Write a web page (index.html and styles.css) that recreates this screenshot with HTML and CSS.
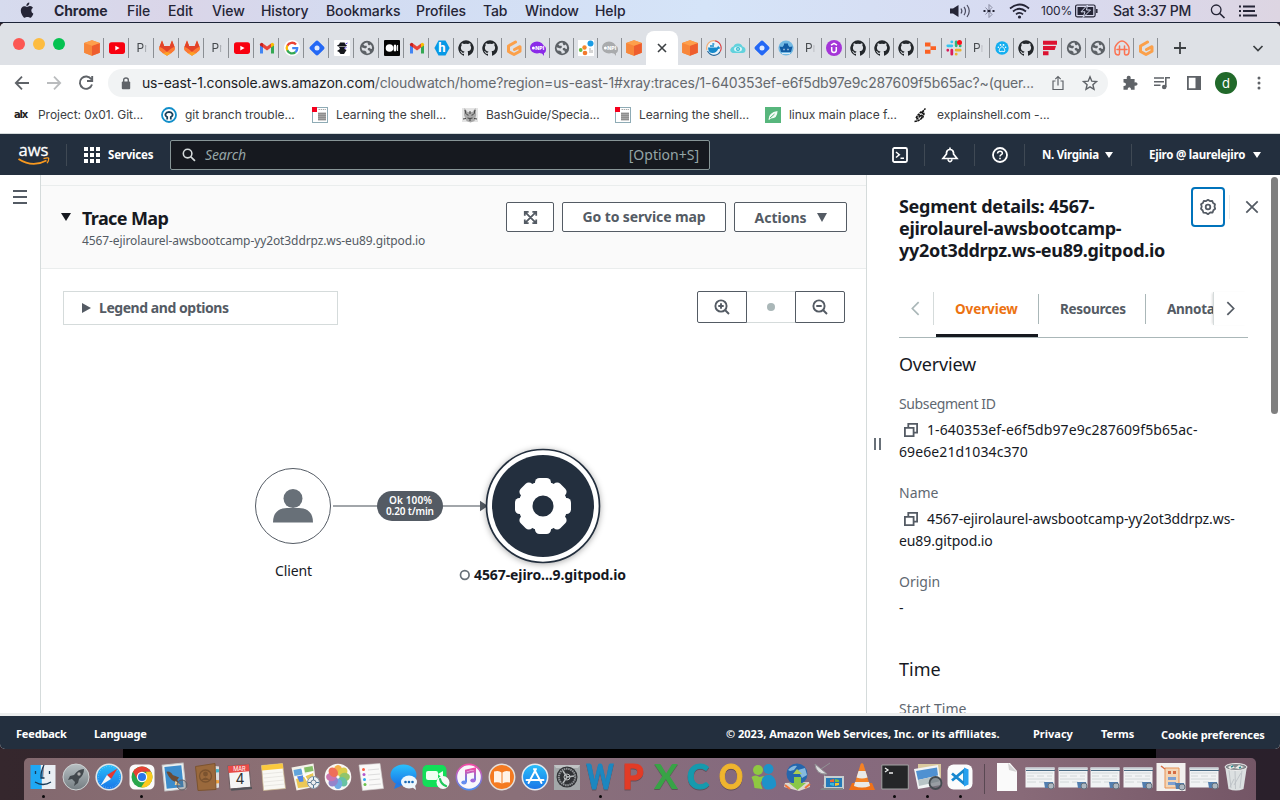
FILE: index.html
```html
<!DOCTYPE html>
<html lang="en">
<head>
<meta charset="utf-8">
<title>CloudWatch – Trace Map</title>
<link rel="stylesheet" href="styles.css">
</head>
<body>
<svg class="defs" width="0" height="0">
  <defs>
    <symbol id="cube" viewBox="0 0 16 16"><path d="M8 .3 15.8 3v9.7L8 15.8.2 12.7V3z" fill="#f7893b"/><path d="M.2 3 8 5.8v10L.2 12.7z" fill="#f7863a"/><path d="M8 5.8 15.8 3v9.7L8 15.8z" fill="#ee5d2e"/><path d="M.2 3 8 .3 15.8 3 8 5.8z" fill="#fe9f4b"/></symbol>
    <symbol id="yt" viewBox="0 0 16 16"><rect y="2.3" width="16" height="11.6" rx="2.6" fill="#f8000f"/><path d="M6.3 5.7v4.8L10.6 8z" fill="#fff"/></symbol>
    <symbol id="gitlab" viewBox="0 0 16 16"><path d="M3 .6 5.2 6h5.6L13 .6 15.6 7q.8 3-1.600 4.600L8 15.800 2 11.600Q-.4 10 .4 7z" fill="#fc6d26"/><path d="M3 .6 5.200 6h5.600L13 .6 15.600 7 8 12.500.4 7z" fill="#e24329"/><path d="M.4 7q3 .5 7.600 5l-4 1.400L2 11.600Q-.4 10 .4 7M15.600 7q-3 .5-7.600 5l4 1.400 2-1.800q2.400-1.600 1.600-4.600" fill="#fc7a34"/><path d="M8 11.800l4 1.600L8 15.800 4 13.400z" fill="#fca326"/></symbol>
    <symbol id="gmail" viewBox="0 0 16 16"><path d="M1 4v9.500h3V7z" fill="#4285f4"/><path d="M15 4v9.500h-3V7z" fill="#34a853"/><path d="M4 7.500V3.500l4 3 4-3v4l-4 3z" fill="#ea4335"/><path d="M1 5.500V4.300Q1.500 1.800 4 3.300v4.300z" fill="#c5221f"/><path d="M15 5.500V4.300Q14.500 1.800 12 3.300v4.300z" fill="#fbbc04"/></symbol>
    <symbol id="google" viewBox="0 0 16 16"><circle cx="8" cy="8" r="8" fill="#fff"/><g fill="none" stroke-width="2.300"><path d="M12 4.500A5.300 5.300 0 0 0 3.300 5.700" stroke="#ea4335"/><path d="M3.300 5.600a5.300 5.300 0 0 0 0 4.800" stroke="#fbbc05"/><path d="M3.200 10.300a5.300 5.300 0 0 0 8.300 1.800" stroke="#34a853"/><path d="M11.400 12.200q1.900-1.700 1.800-4H8.200" stroke="#4285f4"/></g></symbol>
    <symbol id="diamond" viewBox="0 0 16 16"><rect x="2.200" y="2.200" width="11.600" height="11.600" rx="2" transform="rotate(45 8 8)" fill="#2468f5"/><circle cx="8" cy="8" r="2.500" fill="#dfeafe"/></symbol>
    <symbol id="spy" viewBox="0 0 16 16"><rect width="16" height="16" rx="1" fill="#fff"/><path d="M3 5.500 5 4.500 6 2.500h4.500l1 2 1.500 1-1 1H4zM5 7h6l-.5 2 2 1-2.500 4H6.500L5 12l-2-1 3-2z" fill="#16171c"/><path d="m11.500 4 2-1M10 8.500l2.500-1" stroke="#5a41d7"/></symbol>
    <symbol id="globe" viewBox="0 0 16 16"><circle cx="8" cy="8" r="7.200" fill="#5c6166"/><path d="M8.500 2.600q-2.500 0-4.200 1.900l1.200 1.300h2l.5 1.500-1.700 1.200-3.800-1.300q0 1.800 1 3.200l2.500.3 1.500 1.200v1.500q2 .3 3.500-.8l-.5-1.800-1.700-.8V8.200l2-.4 1 1.200 1.300-.3q.1-2.600-1.400-4.200l-1.700.9-1-1z" fill="#dee1e6"/></symbol>
    <symbol id="medium" viewBox="0 0 16 16"><rect width="16" height="16" rx="1" fill="#050505"/><circle cx="5.500" cy="8" r="3.800" fill="#fff"/><ellipse cx="11" cy="8" rx="1.500" ry="3.500" fill="#fff"/><path d="M13.600 5v6" stroke="#fff"/></symbol>
    <symbol id="hash" viewBox="0 0 16 16"><path d="m4.500.6h7L15.600 8l-4.100 7.400h-7L.4 8z" fill="#0799e6"/><text x="8" y="12.300" text-anchor="middle" font-family="Roboto,sans-serif" font-size="13" font-weight="700" fill="#fff">h</text></symbol>
    <symbol id="gh" viewBox="0 0 16 16"><path d="M8 .2a8 8 0 0 0-2.500 15.500c.4.100.5-.2.500-.4v-1.500c-2.200.5-2.700-1-2.700-1-.4-.9-.9-1.200-.9-1.200-.8-.5 0-.5 0-.5.800.1 1.300.8 1.300.8.700 1.300 1.900.9 2.300.7.100-.5.300-.9.500-1.100-1.800-.2-3.600-.9-3.600-3.900 0-.9.300-1.600.8-2.200-.1-.2-.4-1 .1-2.100 0 0 .7-.2 2.200.8a7.500 7.500 0 0 1 4 0c1.500-1 2.200-.8 2.200-.8.500 1.100.2 1.900.1 2.100.5.600.8 1.300.8 2.200 0 3-1.900 3.700-3.600 3.900.3.200.5.700.5 1.500v2.300c0 .2.100.5.600.4A8 8 0 0 0 8 .2" fill="#23272b"/></symbol>
    <symbol id="gitpod" viewBox="0 0 16 16"><path d="m9.500 2-7 4v5.500L8 14.500l6-3.300V6.700L8.500 9.500" fill="none" stroke="#fba04a" stroke-width="3" stroke-linejoin="round" stroke-linecap="round"/></symbol>
    <symbol id="npi" viewBox="0 0 16 16"><ellipse cx="7" cy="7.600" rx="7" ry="6" fill="currentColor"/><ellipse cx="12" cy="9.500" rx="4" ry="4" fill="currentColor"/><path d="m11 12 3 4v-5z" fill="currentColor"/><circle cx="3.400" cy="8" r="1.500" fill="#fff"/><text x="5.300" y="9.900" font-family="Inter,sans-serif" font-size="5.200" font-weight="800" textLength="9" fill="#fff">NPI</text></symbol>
    <symbol id="dots" viewBox="0 0 16 16"><rect width="16" height="16" fill="#fff"/><circle cx="12.500" cy="3.500" r="3" fill="#1a9ce5"/><circle cx="6.500" cy="7.500" r="2.200" fill="#f6862c"/><circle cx="2.700" cy="10" r="1.900" fill="#67bd45"/><circle cx="7" cy="13" r="2.300" fill="#f2792b"/><path d="M12 8v5m2-3v3" stroke="#aaa"/></symbol>
    <symbol id="docker" viewBox="0 0 16 16"><circle cx="8" cy="8" r="7.300" fill="#e9f4fb"/><path d="M1 10A7.200 7.200 0 0 1 9 .8" fill="none" stroke="#f3ae75" stroke-width="1.200"/><path d="M9 .8a7.200 7.200 0 0 1 5 11" fill="none" stroke="#dc4545" stroke-width="1.200"/><path d="M1.500 11Q4 15.300 8 15.300t6-3.500" fill="none" stroke="#27679b" stroke-width="1.200"/><path d="M2 7.500h9l1.300-1.700.8 1.500 1.500.2q-1 1.500-2.400 1.500-1.800 4-5.500 4-4.500 0-4.700-5.500M4 5.300h4v1.500H4zm2.300-2h2v1.500h-2z" fill="#1689ca"/></symbol>
    <symbol id="cloudeye" viewBox="0 0 16 16"><path d="M2.500 13q-3-1.500-2-4t3-2.500Q4.500 3.500 8 3.500t4.500 3Q15.500 7 15.500 10t-3 3z" fill="#62d2dd"/><ellipse cx="8" cy="9" rx="4" ry="2.600" fill="#d6f5f8"/><circle cx="8" cy="9" r="2" fill="#2fb7cf"/><circle cx="8" cy="9" r=".8" fill="#fff"/></symbol>
    <symbol id="crown" viewBox="0 0 16 16"><circle cx="8" cy="8" r="7.600" fill="#73b9e3"/><path d="m1.500 6.500 3 .5L6 5V3.500h4V5l1.500 2 3-.5-1.500 5.500H3z" fill="#125ca4"/><path d="M4 13.500h8" stroke="#dcecf6"/><path d="M5.500 9.500h1m3 0h1" stroke="#fff" stroke-width="1.500"/></symbol>
    <symbol id="udemy" viewBox="0 0 16 16"><circle cx="8" cy="8" r="8" fill="#a435d8"/><path d="m5 5.200 3-1.900 3 1.900M5.700 7v3.300q0 2.200 2.300 2.200t2.300-2.200V7" fill="none" stroke="#fff" stroke-width="1.500"/></symbol>
    <symbol id="replit" viewBox="0 0 16 16"><path d="M3 2.500h5.500v4H3zm5.500 3.700h5.500v3.700H8.500zM3 9.700h5.500v4H3z" fill="#fb6123"/></symbol>
    <symbol id="slack" viewBox="0 0 16 16"><g stroke-width="2.800" stroke-linecap="round"><path d="M1.800 5.800h4M5.800 1.800v.1" stroke="#36c5f0"/><path d="M10.200 1.800v4M14.200 5.800v.1" stroke="#2eb67d"/><path d="M14.200 10.200h-4M10.200 14.200v-.1" stroke="#ecb22e"/><path d="M5.800 14.200v-4M1.800 10.200v.1" stroke="#d91e5b"/></g><circle cx="13.500" cy="2.500" r="2.500" fill="#fc1018"/></symbol>
    <symbol id="paw" viewBox="0 0 16 16"><circle cx="8" cy="8" r="6.700" fill="#13aef0"/><path d="M8 6.800c2 0 4 4.900 1.900 4.900-1 0-1-.5-1.900-.5s-.9.500-1.900.5C4 11.700 6 6.800 8 6.800" fill="none" stroke="#fff"/><circle cx="6.500" cy="4.900" r=".9" fill="#fff"/><circle cx="9.500" cy="4.900" r=".9" fill="#fff"/><circle cx="4.400" cy="7.300" r=".8" fill="#fff"/><circle cx="11.600" cy="7.300" r=".8" fill="#fff"/></symbol>
    <symbol id="fbars" viewBox="0 0 16 16"><path d="M1 .8h14v4H1zM1 6h13l-1.300 4H1zm0 5.200h5.500v4H1z" fill="#dc1231"/></symbol>
    <symbol id="airb" viewBox="0 0 16 16"><path d="M4.500 15Q1 15 1 11.500V8q0-2 3.500-5.500Q8-.5 11.500 2.500 15 6 15 8v3.500q0 3.500-3 3.500-1.500 0-1.500-2V6M5.500 6v7q0 2-1.500 2M3 9.500h10" fill="none" stroke="#fb7352" stroke-width="1.500" stroke-linecap="round"/></symbol>
    <symbol id="paper" viewBox="0 0 16 16"><rect x=".5" y=".5" width="15" height="15" fill="#fff" stroke="#8eabb5"/><path d="M0 0h5v5H0z" fill="#f5001d"/><path d="M6.500 2.500H14" stroke="#aaa" stroke-dasharray="1.500 .7"/><path d="M6 5.500h8v8H6z" fill="#a5a5a5"/><path d="M6 6.500h8M6 8.500h8M6 10.500h8M6 12.500h8" stroke="#888" stroke-width=".8"/></symbol>
    <symbol id="copy" viewBox="0 0 16 16"><path d="M1.900 5.900h8.700v8.200H1.900zM5.300 5.200V1.900h8.800v8.700H11" fill="none" stroke="#545b64" stroke-width="1.800"/></symbol>
    <symbol id="shot" viewBox="0 0 30 28"><path d="M.5 4.500h29v20H.5z" fill="#f1f3f4"/><path d="M.5 4.500h29v2H.5z" fill="#c8d0d6"/><path d="M1 7.500h29" stroke="#496b84"/><path d="M2 10h26M2 13h7m3 0h7m3 0h5M2 16h25M2 19h9m3 0h6" stroke="#cbd0d3" stroke-width=".8"/><path d="M19 19h9l1 6H20z" fill="#527eaf"/><circle cx="26" cy="23" r="3" fill="#aeb8c1" stroke="#64717d"/></symbol>
    <linearGradient id="blu" x2="0" y2="1"><stop stop-color="#2ac0fb"/><stop offset="1" stop-color="#1974e7"/></linearGradient>
    <linearGradient id="gry" x2="0" y2="1"><stop stop-color="#b7bfc2"/><stop offset="1" stop-color="#747d82"/></linearGradient>
    <linearGradient id="note" x2="0" y2="1"><stop stop-color="#f24aa5"/><stop offset="1" stop-color="#4d8cf0"/></linearGradient>
  </defs>
</svg>

<header class="menubar">
  <svg class="apple" viewBox="0 0 14 16"><path d="M9.300.5q.2 1.600-.8 2.600-.9 1-2.100.9-.1-1.500.8-2.400.9-1 2.100-1.100M7 4.900c.7 0 1.700-.9 3.100-.8q1.900.1 2.900 1.600-1.800 1.100-1.700 3 .1 2.200 2.100 3.100-.9 2.400-2.300 3.600c-1.200.8-2-.3-3.700-.3s-2.500 1.100-3.600.3C2.200 14 .8 11.200.8 8.600c0-2.800 1.700-4.400 3.500-4.400 1.200 0 2 .7 2.700.7" fill="#252536"/></svg>
  <b>Chrome</b><span>File</span><span>Edit</span><span>View</span><span>History</span><span>Bookmarks</span><span>Profiles</span><span>Tab</span><span>Window</span><span>Help</span>
  <svg width="22" height="16" viewBox="0 0 22 16"><path d="M0 5.500h3L8.500 2v12L3 10.500H0z" fill="#252536"/><path d="M11 5.500q1.700 2.500 0 5M14 3.800q3 4.200 0 8.400M17 2q4.500 6 0 12" fill="none" stroke="#4b4c60" stroke-width="1.200"/></svg>
  <svg width="12" height="16" viewBox="0 0 12 16"><path d="m2.500 4.500 6.500 7-3 3v-13l3 3-6.500 7" fill="none" stroke="#888ba0"/><path d="M.5 8h2m2 0h3m2 0h2" stroke="#252536" stroke-width="2"/></svg>
  <svg width="22" height="16" viewBox="0 0 22 16"><g fill="none" stroke="#252536" stroke-width="1.700"><path d="M1 5.500q10-8 19 0M4 8.500q6.500-5.500 13 0M7 11.300q3.500-3 7 0"/></g><circle cx="10.500" cy="14" r="1.600" fill="#252536"/></svg>
  <span class="pct">100%</span>
  <svg width="24" height="14" viewBox="0 0 24 14"><rect x=".6" y="1" width="19.500" height="11.800" rx="1.500" fill="none" stroke="#252536" stroke-width="1.200"/><rect x="2.500" y="3" width="15.700" height="8" fill="#252536"/><path d="m12.500 1-6.500 6.800h4L8 13.500 15.500 6h-4z" fill="#252536" stroke="#d8dcf0"/><path d="M21.800 5v4" stroke="#252536" stroke-width="1.500"/></svg>
  <span class="clock">Sat 3:37 PM</span>
  <svg width="16" height="16" viewBox="0 0 16 16"><circle cx="6.200" cy="6.800" r="4.800" fill="none" stroke="#252536" stroke-width="1.300"/><path d="m9.800 10.500 4.700 4.500" stroke="#252536" stroke-width="1.700"/></svg>
  <svg width="18" height="14" viewBox="0 0 18 14"><path d="M0 2.500h2M0 7h2m-2 4.500h2M4 2.500h12M4 7h12M4 11.500h14" stroke="#252536" stroke-width="1.800"/></svg>
</header>

<section class="browser">
<nav class="tabs">
  <div class="lights"><i class="red"></i><i class="amber"></i><i class="green"></i></div>
  <i class="tab w"><svg><use href="#cube"/></svg></i><i class="tab w"><svg><use href="#yt"/></svg></i><i class="tab w"><span class="pr">Pr</span></i><i class="tab w"><svg><use href="#gitlab"/></svg></i><i class="tab w"><svg><use href="#gitlab"/></svg></i><i class="tab w"><span class="pr">Pr</span></i><i class="tab w"><svg><use href="#yt"/></svg></i><i class="tab w"><svg><use href="#gmail"/></svg></i><i class="tab w"><svg><use href="#google"/></svg></i><i class="tab w"><svg><use href="#diamond"/></svg></i><i class="tab w"><svg><use href="#spy"/></svg></i><i class="tab w"><svg><use href="#globe"/></svg></i><i class="tab w"><svg><use href="#medium"/></svg></i><i class="tab w"><svg><use href="#gmail"/></svg></i><i class="tab w"><svg><use href="#hash"/></svg></i><i class="tab"><svg><use href="#gh"/></svg></i><i class="tab"><svg><use href="#gh"/></svg></i><i class="tab"><svg><use href="#gitpod"/></svg></i><i class="tab purple"><svg><use href="#npi"/></svg></i><i class="tab"><svg><use href="#globe"/></svg></i><i class="tab"><svg><use href="#dots"/></svg></i><i class="tab grey"><svg><use href="#npi"/></svg></i><i class="tab last"><svg><use href="#cube"/></svg></i>
  <i class="tab active"><svg viewBox="0 0 16 16"><path d="m4 4 8 8m0-8-8 8" stroke="#3c4043" stroke-width="1.600"/></svg></i>
  <i class="tab"><svg><use href="#cube"/></svg></i><i class="tab"><svg><use href="#docker"/></svg></i><i class="tab"><svg><use href="#cloudeye"/></svg></i><i class="tab"><svg><use href="#diamond"/></svg></i><i class="tab"><svg><use href="#crown"/></svg></i><i class="tab"><span class="pr">Pr</span></i><i class="tab"><svg><use href="#udemy"/></svg></i><i class="tab"><svg><use href="#gh"/></svg></i><i class="tab"><svg><use href="#gh"/></svg></i><i class="tab"><svg><use href="#gh"/></svg></i><i class="tab"><svg><use href="#replit"/></svg></i><i class="tab"><svg><use href="#slack"/></svg></i><i class="tab"><span class="pr">Pr</span></i><i class="tab"><svg><use href="#paw"/></svg></i><i class="tab"><svg><use href="#gh"/></svg></i><i class="tab"><svg><use href="#fbars"/></svg></i><i class="tab"><svg><use href="#globe"/></svg></i><i class="tab"><svg><use href="#globe"/></svg></i><i class="tab"><svg><use href="#airb"/></svg></i><i class="tab"><svg><use href="#gitpod"/></svg></i>
  <svg class="plus" viewBox="0 0 16 16"><path d="M8 2v12M2 8h12" stroke="#3c4043" stroke-width="1.800"/></svg>
  <svg class="chev" viewBox="0 0 16 16"><path d="m3.500 6 4.500 4.500L12.500 6" fill="none" stroke="#3c4043" stroke-width="1.700"/></svg>
</nav>

<div class="toolbar">
  <svg viewBox="0 0 16 16"><path d="M15 8H2m6-6.300L1.800 8 8 14.300" fill="none" stroke="#5f6368" stroke-width="1.800"/></svg>
  <svg viewBox="0 0 16 16"><path d="M1 8h13M8 1.700 14.200 8 8 14.300" fill="none" stroke="#babcbe" stroke-width="1.800"/></svg>
  <svg viewBox="0 0 16 16"><path d="M13.300 4.300A6.200 6.200 0 1 0 14 9.500M14.200 1v5H9" fill="none" stroke="#5f6368" stroke-width="1.900"/></svg>
  <div class="omnibox">
    <svg class="lock" viewBox="0 0 10 13"><rect x=".8" y="4.500" width="8.400" height="7.700" rx="1" fill="#5f6368"/><path d="M2.700 5V3q0-2 2.300-2t2.300 2v2" fill="none" stroke="#5f6368" stroke-width="1.400"/></svg>
    <span class="url"><b>us-east-1.console.aws.amazon.com</b>/cloudwatch/home?region=us-east-1#xray:traces/1-640353ef-e6f5db97e9c287609f5b65ac?~(quer...</span>
    <svg viewBox="0 0 16 16"><path d="M5.500 6H3v8.500h10V6h-2.500M8 10.500V1.700M5.300 4.200 8 1.500l2.700 2.700" fill="none" stroke="#5f6368" stroke-width="1.200"/></svg>
    <svg viewBox="0 0 16 16"><path d="m8 1.800 1.800 4.400 4.700.4-3.600 3.100 1.100 4.600L8 11.800l-4 2.500 1.100-4.600-3.600-3.100 4.700-.4z" fill="none" stroke="#5f6368" stroke-width="1.400"/></svg>
  </div>
  <svg viewBox="0 0 16 16"><path d="M1.500 4h3.300q-.5-3.300 1.900-3.300T8.600 4h4v3.400q3-.4 3 1.700t-3 1.700v4H9q.2-2.500-1.700-2.500T5.700 14.800H1.500v-3.700Q4 11 4 9.200T1.500 7.500z" fill="#5f6368"/></svg>
  <svg viewBox="0 0 16 16"><path d="M0 3h10M0 6.700h10M0 10.300h6.500M11.800 12V2.700H16" fill="none" stroke="#5f6368" stroke-width="1.600"/><circle cx="10.200" cy="12" r="2.300" fill="#5f6368"/></svg>
  <svg viewBox="0 0 16 16"><path d="M1.900 1.900h12.200v12.200H1.900z" fill="none" stroke="#5f6368" stroke-width="1.800"/><path d="M9.500 1.900h4.600v12.200H9.500z" fill="#5f6368"/></svg>
  <span class="avatar">d</span>
  <svg viewBox="0 0 16 16" fill="#5f6368"><circle cx="8" cy="3" r="1.500"/><circle cx="8" cy="8" r="1.500"/><circle cx="8" cy="13" r="1.500"/></svg>
</div>

<div class="bookmarks">
  <b class="alx">alx</b><span>Project: 0x01. Git...</span>
  <svg viewBox="0 0 16 16"><circle cx="8" cy="8" r="7" fill="none" stroke="#128ec9" stroke-width="1.800"/><path d="M6.200 12.500V10q-2.200-1-1.700-3Q5.300 5 8 5t3.500 2q.5 2-1.700 3v2.500" fill="none" stroke="#173f59" stroke-width="1.800"/></svg><span>git branch trouble...</span>
  <svg><use href="#paper"/></svg><span>Learning the shell...</span>
  <svg viewBox="0 0 16 16"><path d="M0 1h16v14H0z" fill="#e4e4e4"/><path d="m2.500 1 3 4h5l3-4 .7 7-1.700 6-4 1.500L4.500 14 2 8z" fill="#a9a9a9"/><path d="m4.500 7.500 2 .7m3 0 2-.7M5.500 11l2.500.5 2.500-.5M7 13h2M3 3l1 4m9-4-1 4M1 12l3-.5m8 0 3 .5M8 4v3" stroke="#333" stroke-width=".9" fill="none"/></svg><span>BashGuide/Specia...</span>
  <svg><use href="#paper"/></svg><span>Learning the shell...</span>
  <svg viewBox="0 0 16 16"><path d="M0 0h16v16H0z" fill="#57b67c"/><path d="M3.500 12.500q0-7 9-8.500 0 7.500-6.500 7.500l-2 1.500z" fill="#f1fbf4"/><path d="m5 11 4.500-4" stroke="#57b67c"/></svg><span>linux main place f...</span>
  <svg viewBox="0 0 16 16"><path d="m1.500 14.500 3-.5 5-3 1.500-4-1-3 2.500-2.500M3 11l2-3 3-3 3-1M3.500 12.500l3-3 3-1.500M6 7.500l3 3M8 5l2.500 2" fill="none" stroke="#111" stroke-width="1.500" stroke-dasharray="2.500 .5"/></svg><span>explainshell.com -...</span>
</div>

<div class="awsbar">
  <svg class="awslogo" viewBox="0 0 34 24"><text x="1.500" y="13" font-family="Open Sans,sans-serif" font-size="17" textLength="30" lengthAdjust="spacingAndGlyphs" fill="#fff" stroke="#fff" stroke-width=".3">aws</text><path d="M1.500 16q14 9 28 1.500" fill="none" stroke="#f7981f" stroke-width="1.800"/><path d="M26.500 15.700q5-1.400 5.200-.4.300 1.700-1.600 5" fill="none" stroke="#f7981f" stroke-width="1.300"/></svg>
  <i class="rule r1"></i>
  <svg class="grid9" viewBox="0 0 16 16" fill="#fff"><path d="M0 0h4v4H0zm6 0h4v4H6zm6 0h4v4h-4zM0 6h4v4H0zm6 0h4v4H6zm6 0h4v4h-4zM0 12h4v4H0zm6 0h4v4H6zm6 0h4v4h-4z"/></svg>
  <b class="services">Services</b>
  <div class="search"><svg viewBox="0 0 16 16"><circle cx="6.400" cy="6.400" r="4.900" fill="none" stroke="#d5dbdb" stroke-width="1.800"/><path d="m10 10 4.800 4.800" stroke="#d5dbdb" stroke-width="2"/></svg><em>Search</em><span>[Option+S]</span></div>
  <div class="awsright">
    <svg viewBox="0 0 16 16"><rect x="1" y="1" width="14" height="14" rx="1.500" fill="none" stroke="#fff" stroke-width="1.800"/><path d="m4 5 3.300 2.700L4 10.500M8.500 11.200H12" fill="none" stroke="#fff" stroke-width="1.500"/></svg>
    <i class="rule"></i>
    <svg viewBox="0 0 16 16"><path d="M8 .5v2M1 11.500h14L11.500 7V5.500Q11 2.500 8 2.500t-3.500 3V7zM5.800 12.500q2.200 4.500 4.400 0" fill="none" stroke="#fff" stroke-width="1.700"/></svg>
    <i class="rule"></i>
    <svg viewBox="0 0 16 16"><circle cx="8" cy="8" r="7" fill="none" stroke="#fff" stroke-width="1.800"/><path d="M5.500 6.500Q5.700 4.200 8 4.200t2.400 2q0 1-1.400 1.700-1 .5-1 1.600" fill="none" stroke="#fff" stroke-width="1.500"/><path d="M7.200 10.700h1.600v1.600H7.200z" fill="#fff"/></svg>
    <i class="rule"></i>
    <b class="region">N. Virginia</b><i class="caret"></i>
    <i class="rule"></i>
    <b class="user">Ejiro @ laurelejiro</b><i class="caret"></i>
  </div>
</div>

<main class="console">
  <aside class="rail"><i></i><i></i><i></i></aside>
  <section class="trace">
    <div class="strip"></div>
    <div class="tracehead">
      <i class="down"></i>
      <div class="tracetitle"><h2>Trace Map</h2><p>4567-ejirolaurel-awsbootcamp-yy2ot3ddrpz.ws-eu89.gitpod.io</p></div>
      <div class="btns">
        <button class="btn expand"><svg viewBox="0 0 16 16"><path d="M1.900 6V1.900H6M10 1.900h4.100V6M14.100 10v4.100H10M6 14.100H1.900V10M2 2l12 12M14 2 2 14" fill="none" stroke="#545b64" stroke-width="1.900"/></svg></button>
        <button class="btn goto"><span>Go to service map</span></button>
        <button class="btn actions"><span>Actions</span><i></i></button>
      </div>
    </div>
    <div class="canvasbar">
      <div class="legend"><i></i><b>Legend and options</b></div>
      <div class="zoomer">
        <button><svg viewBox="0 0 16 16"><circle cx="7" cy="7" r="5.600" fill="none" stroke="#545b64" stroke-width="1.900"/><path d="m11 11 4 4M7 4.300v5.400M4.300 7h5.400" stroke="#545b64" stroke-width="1.900"/></svg></button>
        <div><i></i></div>
        <button><svg viewBox="0 0 16 16"><circle cx="7" cy="7" r="5.600" fill="none" stroke="#545b64" stroke-width="1.900"/><path d="m11 11 4 4M4.300 7h5.400" stroke="#545b64" stroke-width="1.900"/></svg></button>
      </div>
    </div>
    <svg class="map" width="825" height="270" viewBox="41 400 825 270">
      <circle cx="293" cy="506" r="37.500" fill="#fff" stroke="#545b64"/>
      <circle cx="293" cy="498.500" r="9.500" fill="#687078"/><path d="M273 522.500q0-14 14-14.500h12q14 .5 14 14.500z" fill="#687078"/>
      <path d="M333 506h150" stroke="#a2a6aa" stroke-width="1.800"/><path d="m480 500.800 8 5.200-8 5.200z" fill="#545b64"/>
      <rect x="377" y="491" width="66" height="30" rx="15" fill="#545b64"/>
      <text class="edge" x="389" y="504" textLength="43">Ok 100%</text><text class="edge" x="386" y="515" textLength="48">0.20 t/min</text>
      <circle class="halo" cx="543" cy="506" r="56.500" fill="#fff" stroke="#232f3e" stroke-width="1.700"/>
      <circle cx="543" cy="506" r="51" fill="#232f3e"/>
      <circle cx="543" cy="506" r="17.500" fill="none" stroke="#fff" stroke-width="14"/>
      <g fill="#fff"><rect id="tooth" x="535" y="478" width="16" height="16" rx="4.500"/><use href="#tooth" transform="rotate(45 543 506)"/><use href="#tooth" transform="rotate(90 543 506)"/><use href="#tooth" transform="rotate(135 543 506)"/><use href="#tooth" transform="rotate(180 543 506)"/><use href="#tooth" transform="rotate(225 543 506)"/><use href="#tooth" transform="rotate(270 543 506)"/><use href="#tooth" transform="rotate(315 543 506)"/></g>
      <text class="node" x="275" y="576" textLength="37">Client</text>
      <circle cx="464.800" cy="575" r="4.300" fill="#fff" stroke="#687078" stroke-width="1.700"/>
      <text class="node strong" x="474" y="580" textLength="152">4567-ejiro...9.gitpod.io</text>
    </svg>
  </section>
  <aside class="panel">
    <div class="grip"><i></i><i></i></div>
    <div class="detail">
      <div class="dhead">
        <h2>Segment details: 4567-<br>ejirolaurel-awsbootcamp-<br>yy2ot3ddrpz.ws-eu89.gitpod.io</h2>
        <button class="gear"><svg viewBox="0 0 18 18"><path d="m9 1.800 1.900 1.300 2.300-.2.900 2.100 1.900 1.300-.5 2.300.7 2.200-1.800 1.500-.8 2.200-2.300-.1L9 16.200l-2.200-1.400-2.300-.1-.8-2.200-1.700-1.700.7-2.200-.7-2.300 1.900-1.300.9-2.100 2.300.2z" fill="none" stroke="#545b64" stroke-width="1.800" stroke-linejoin="round"/><circle cx="9" cy="9" r="2.300" fill="none" stroke="#545b64" stroke-width="1.800"/></svg></button>
        <i class="sep"></i>
        <svg class="close" viewBox="0 0 16 16"><path d="m1.500 1.500 13 13m0-13-13 13" stroke="#545b64" stroke-width="2"/></svg>
      </div>
      <div class="dtabs">
        <div class="arr l"><svg viewBox="0 0 10 16"><path d="M8.500 1 1.500 8l7 7" fill="none" stroke="#aab7b8" stroke-width="1.900"/></svg></div>
        <div class="tablist"><b class="on">Overview</b><b class="res">Resources</b><b class="ann">Annotations</b></div>
        <div class="arr r"><svg viewBox="0 0 10 16"><path d="m1.500 1 7 7-7 7" fill="none" stroke="#545b64" stroke-width="1.900"/></svg></div>
      </div>
      <h3 class="h-ov">Overview</h3>
      <dl>
        <dt class="k-sub">Subsegment ID</dt><dd class="v-id"><svg><use href="#copy"/></svg>1-640353ef-e6f5db97e9c287609f5b65ac-<br>69e6e21d1034c370</dd>
        <dt>Name</dt><dd class="v-name"><svg><use href="#copy"/></svg>4567-ejirolaurel-awsbootcamp-yy2ot3ddrpz.ws-<br>eu89.gitpod.io</dd>
        <dt>Origin</dt><dd>-</dd>
      </dl>
      <h3 class="h-time">Time</h3>
      <dl><dt>Start Time</dt></dl>
    </div>
    <i class="thumb"></i>
  </aside>
</main>
<footer class="foot"><b class="f1">Feedback</b><b class="f2">Language</b><b class="f3">© 2023, Amazon Web Services, Inc. or its affiliates.</b><b class="f4">Privacy</b><b class="f5">Terms</b><b class="f6">Cookie preferences</b></footer>
</section>

<section class="desk">
<div class="backwin"></div>
<div class="dock">
  <i class="app run"><svg viewBox="0 0 28 28"><path d="M1.500 2h12v24h-12z" fill="#1fa8f4"/><path d="M15 2h11.500v24H13.500z" fill="#e9eef3"/><path d="M15 2q-3.500 7-3 13h3.500l.3 11h-3V15h-1V2z" fill="#e9eef3"/><path d="M6.500 8v3m14-3v3M6 19q8 5 16 0M15 2q-3.500 7-3 13h3.500" fill="none" stroke="#173b59" stroke-width="1.300"/></svg></i>
  <i class="app"><svg viewBox="0 0 28 28"><circle cx="14" cy="14" r="13" fill="url(#gry)" stroke="#cdd2d3"/><path d="M22 6q-6 0-10 6l-4 1-2 4 4-1 3 3-1 4 4-3 1-4q5-4 5-10" fill="#42484d"/><circle cx="17" cy="11" r="1.700" fill="#aaa"/></svg></i>
  <i class="app"><svg viewBox="0 0 28 28"><circle cx="14" cy="14" r="12.800" fill="url(#blu)" stroke="#dfe5e8" stroke-width="1.600"/><circle cx="14" cy="14" r="10.700" fill="none" stroke="#a2dcfb" stroke-dasharray=".5 2"/><path d="m22.500 5.500-6.500 10.500-4-4z" fill="#e73731"/><path d="M5.500 22.500 12 12l4 4z" fill="#f3f6f8"/></svg></i>
  <i class="app run"><svg viewBox="0 0 28 28"><rect x="1.500" y="1.500" width="25" height="25" rx="5.500" fill="#fafafa"/><circle cx="14" cy="14" r="10.500" fill="#28a64b"/><path d="M5 8.700A10.500 10.500 0 0 1 23 8.700H14l-4.500 7.700z" fill="#e64134"/><path d="M23 8.700A10.500 10.500 0 0 1 13 24.500l5.300-8V8.700z" fill="#fdc91d"/><circle cx="14" cy="14" r="5.200" fill="#fff"/><circle cx="14" cy="14" r="4" fill="#2b76e8"/></svg></i>
  <i class="app"><svg viewBox="0 0 28 28"><g transform="rotate(-6 14 14)"><path d="M3.500 1h21v26h-21z" fill="#edf0f0" stroke="#c9cccd"/><path d="M5.500 3h17v22h-17z" fill="#3d8dcc"/><path d="M7 8q4-1 6 4l6 3-2 2 1 4-5-3q-4-3-6-10" fill="#6b4c36"/><path d="m15 18 5 5-6-1z" fill="#f1d29b"/></g><circle cx="22" cy="22" r="5" fill="#55565c55" stroke="#656167"/></svg></i>
  <i class="app"><svg viewBox="0 0 28 28"><path d="m22 3 4 .5v21l-4 1z" fill="#ddd"/><path d="m23 6 3 .3v3l-3 .3z" fill="#44b4c9"/><path d="m23 17 3 .3v3l-3 .3z" fill="#f0a23c"/><path d="M2.500 3.500 22 .5l1 26-18 1z" fill="#9a693c" stroke="#7c532f"/><circle cx="12.500" cy="13" r="6" fill="none" stroke="#7b532f" stroke-width="1.300"/><circle cx="12.500" cy="11" r="2.400" fill="#7b532f"/><path d="M8.500 17q4-5 8 0z" fill="#7b532f"/></svg></i>
  <i class="app"><svg viewBox="0 0 28 28"><g transform="rotate(-5 14 14)"><path d="M3 2h21v23H3z" fill="#f4f5f5" stroke="#6c5c60"/><path d="M3 2h21v7H3z" fill="#e94b48"/><path d="M4 26h21" stroke="#525459" stroke-width="2"/></g><text x="13.500" y="7.700" text-anchor="middle" font-family="Inter,sans-serif" font-size="5.500" fill="#fff">MAR</text><text x="14" y="21" text-anchor="middle" font-family="Inter,sans-serif" font-size="14" fill="#333">4</text></svg></i>
  <i class="app"><svg viewBox="0 0 28 28"><path d="m2.500 2.500 21-2 3 25-22 2z" fill="#f9f8f4" stroke="#cbb88e" stroke-width=".7"/><path d="m2.500 2.500 21-2 .8 5-21.300 2z" fill="#fac93e"/><path d="m4 11 20.500-2M4.500 15 25 13M5 19l20.500-2M5.300 23 26 21" stroke="#dddcd6" stroke-width=".6"/></svg></i>
  <i class="app"><svg viewBox="0 0 28 28"><path d="m.5 4.500 22-4 3 23-20 4z" fill="#f3f2e9"/><path d="m2.500 7 8-1.500 1 6-8 1.500z" fill="#62a5dc"/><path d="m13 4.500 8.500-1.500 1 5-8.500 1.500z" fill="#84bf66"/><path d="m5 16 8-3 9-3 1 9-6 5-10 1z" fill="#ebc756"/><path d="m4 15 9-2 9-4M11 5l3 9 5 8" fill="none" stroke="#fff" stroke-width="1.500"/><path d="m6 13.500 6-1.300.5 6.300-4 .5z" fill="#4f86e8"/><circle cx="22.500" cy="19.500" r="6" fill="#edf0f2" stroke="#8796a2"/><circle cx="22.500" cy="19.500" r="2.500" fill="none" stroke="#687d90"/><path d="M22.500 14v3m0 5v3M17 19.500h3m5 0h3" stroke="#4b7799"/></svg></i>
  <i class="app"><svg viewBox="0 0 28 28"><circle cx="14" cy="14" r="13.300" fill="#f7f7f5"/><g opacity=".85"><ellipse cx="14" cy="7.300" rx="4.200" ry="5.200" fill="#f5a52c"/><ellipse cx="14" cy="7.300" rx="4.200" ry="5.200" fill="#d6c62f" transform="rotate(45 14 14)"/><ellipse cx="14" cy="7.300" rx="4.200" ry="5.200" fill="#82bc51" transform="rotate(90 14 14)"/><ellipse cx="14" cy="7.300" rx="4.200" ry="5.200" fill="#4eb995" transform="rotate(135 14 14)"/><ellipse cx="14" cy="7.300" rx="4.200" ry="5.200" fill="#599de0" transform="rotate(180 14 14)"/><ellipse cx="14" cy="7.300" rx="4.200" ry="5.200" fill="#8570c4" transform="rotate(225 14 14)"/><ellipse cx="14" cy="7.300" rx="4.200" ry="5.200" fill="#c45fa2" transform="rotate(270 14 14)"/><ellipse cx="14" cy="7.300" rx="4.200" ry="5.200" fill="#ed573f" transform="rotate(315 14 14)"/></g></svg></i>
  <i class="app"><svg viewBox="0 0 28 28"><path d="m2 2 21-1.500 3.500 25-21 2z" fill="#f9f9f8" stroke="#d2cfcf" stroke-width=".6"/><path d="m11 7 11-1M11 12l12-1M12 17l11-1M12 22l12-1" stroke="#ddd"/><circle cx="6.500" cy="6.500" r="1.500" fill="#fa6043"/><circle cx="7" cy="11.500" r="1.500" fill="#b257cc"/><circle cx="7.500" cy="16.500" r="1.500" fill="#2caaf1"/><circle cx="8" cy="21.500" r="1.500" fill="#6ac34b"/></svg></i>
  <i class="app"><svg viewBox="0 0 28 28"><ellipse cx="13.500" cy="12" rx="13" ry="10.500" fill="url(#blu)"/><path d="m6 20-2 6 7-3z" fill="#1e7be9"/><ellipse cx="19" cy="19" rx="8" ry="6.500" fill="#eef7fd"/><path d="m22 24 4 3-1-5z" fill="#eef7fd"/><g fill="#1b6ab5"><circle cx="15.500" cy="19" r="1.300"/><circle cx="19" cy="19" r="1.300"/><circle cx="22.500" cy="19" r="1.300"/></g></svg></i>
  <i class="app"><svg viewBox="0 0 28 28"><rect x=".5" y="2" width="24" height="22" rx="5" fill="#12df59"/><rect x="4" y="8" width="12" height="9" rx="2" fill="#effff3"/><path d="m16 11 5-3v8z" fill="#effff3"/><circle cx="21" cy="19.500" r="6.500" fill="#f7f9f8"/><path d="M18 16q1 5 6 7" fill="none" stroke="#20c85b" stroke-width="2.200" stroke-linecap="round"/></svg></i>
  <i class="app"><svg viewBox="0 0 28 28"><circle cx="14" cy="14" r="12.600" fill="#f9f7fb" stroke="url(#note)" stroke-width="1.600"/><path d="M11 19V7.500l9-2V17M11 10l9-2" fill="none" stroke="url(#note)" stroke-width="2"/><ellipse cx="9" cy="19.500" rx="2.700" ry="2" fill="#668ef0"/><ellipse cx="18" cy="17.500" rx="2.700" ry="2" fill="#a267da"/></svg></i>
  <i class="app"><svg viewBox="0 0 28 28"><circle cx="14" cy="14" r="12.700" fill="#f47a21" stroke="#e4e0dc" stroke-width="1.500"/><path d="M6 8.500q5-1.500 7.500 1v11q-3-2-7.500-1zM22 8.500q-5-1.500-7.500 1v11q3-2 7.500-1z" fill="#fff3e8"/></svg></i>
  <i class="app"><svg viewBox="0 0 28 28"><circle cx="14" cy="14" r="12.700" fill="url(#blu)" stroke="#e7eaed" stroke-width="1.500"/><path d="M15 6 7.500 20M13 6l7.500 14M5.500 17h17" fill="none" stroke="#fff" stroke-width="1.900" stroke-linecap="round"/></svg></i>
  <i class="app"><svg viewBox="0 0 28 28"><path d="M1 2h26v25H1z" fill="#a3a7a9"/><path d="M1 2h26l-2 3H3z" fill="#c0c3c4"/><circle cx="14" cy="14" r="10.500" fill="#303235"/><circle cx="14" cy="14" r="8.200" fill="none" stroke="#929598" stroke-width="2" stroke-dasharray="1.500 .7"/><circle cx="14" cy="14" r="3" fill="none" stroke="#c1c3c4"/><path d="m14 14 7-1m-7 1-4-6m4 6-4 6" stroke="#b4b8ba" stroke-width="1.500"/></svg></i>
  <i class="app run office"><svg viewBox="0 0 28 28"><text x="14" y="26" textLength="27" lengthAdjust="spacingAndGlyphs" fill="#1c87c0" stroke="#1c87c0">W</text></svg></i>
  <i class="app office"><svg viewBox="0 0 28 28"><text x="14" y="26" textLength="21" lengthAdjust="spacingAndGlyphs" fill="#e23b26" stroke="#e23b26">P</text></svg></i>
  <i class="app office"><svg viewBox="0 0 28 28"><text x="14" y="26" textLength="24" lengthAdjust="spacingAndGlyphs" fill="#38a346">X</text></svg></i>
  <i class="app office"><svg viewBox="0 0 28 28"><text x="14" y="26" textLength="22" lengthAdjust="spacingAndGlyphs" fill="#159aae" stroke="#159aae">C</text></svg></i>
  <i class="app office"><svg viewBox="0 0 28 28"><text x="14" y="26" textLength="24" lengthAdjust="spacingAndGlyphs" fill="#efb52e" stroke="#efb52e">O</text></svg></i>
  <i class="app"><svg viewBox="0 0 28 28"><g fill="#8fc941"><circle cx="8" cy="7" r="5"/><path d="M1.500 14q4-3 8 0l5-1-4 7 2 6-8-1-1-6z"/></g><g fill="#1e92c8"><circle cx="18.500" cy="6" r="5"/><path d="M12 16q3-5 9-4 6 4 5 11-4 5-11 3-4-4-3-10"/></g></svg></i>
  <i class="app"><svg viewBox="0 0 28 28"><path d="m2 20 24-1 1 5-11 4L1 24z" fill="#ddd7ce"/><path d="m2 22 5 4m20-5-5 4" stroke="#ee743c" stroke-width="2"/><circle cx="14" cy="11" r="10.500" fill="#2466ad"/><path d="M5 7q5-5 9-4l-3 4-4 1zm10 0 7-2 2 7-5 3z" fill="#85b9dd"/><path d="M11 14h7v6h5l-8.500 7L6 20h5z" fill="#89c748"/><path d="m10 11 4-5 5 5z" fill="#adcd50"/></svg></i>
  <i class="app"><svg viewBox="0 0 28 28"><path d="M0 1q1 11 12 10L6 6zM6 6l9-6M9 11l3 7-4 5h5" fill="#dedfe0" stroke="#929295"/><path d="M9 13h20v13H9z" fill="#c5ced0"/><path d="M11 15h16v9H11z" fill="#2379b8"/><path d="m15 17 4-1v3h-4z" fill="#ee6636"/><path d="m20 16 4 1v2h-4z" fill="#76bf40"/><path d="M15 20h4v3l-4-1z" fill="#3dbad6"/><path d="M20 20h4v2l-4 1z" fill="#f6c12f"/><path d="M7 25h21v2H5z" fill="#838789"/></svg></i>
  <i class="app"><svg viewBox="0 0 28 28"><path d="M4 20h20l3 7H1z" fill="#ef7118"/><path d="M12.500 1.500q1.500-3 3 0L22 23q-8 3.500-16 0z" fill="#f48225"/><path d="M10.500 8h7l2 6.500q-5.500 2-11 0zM7 19h14l1 4q-8 3-16 0z" fill="#e9e9e8"/></svg></i>
  <i class="app run"><svg viewBox="0 0 28 28"><path d="M.8 2h26.500v24H.8z" fill="#252628" stroke="#a3a3a3"/><path d="m4 5 3 2-3 2M8 10h4" fill="none" stroke="#eee" stroke-width="1.300"/></svg></i>
  <i class="app run"><svg viewBox="0 0 28 28"><path d="M4 1h23v17H4z" fill="#dac99e"/><path d="m0 6 24-4 3 20-23 4z" fill="#f2f4f5"/><path d="m2 8 21-3.500 1 8L4 17z" fill="#4f91d1"/><path d="m4 17 20-4.500 1 6L5 23z" fill="#b8c4c6"/><circle cx="21.500" cy="20" r="6" fill="#6c7479aa" stroke="#444b50" stroke-width="1.800"/></svg></i>
  <i class="app run"><svg viewBox="0 0 28 28"><rect x="1.500" y="1.500" width="25" height="25" rx="6" fill="#fbfcfc"/><path d="M6 10.500 18.500 21V7L6 17.500" fill="none" stroke="#1688d0" stroke-width="2.800" stroke-linejoin="round"/><path d="m18 4.500 4.500 2v15l-4.500 2z" fill="#28a0ee"/></svg></i>
  <i class="docksep"></i>
  <i class="app"><svg viewBox="0 0 28 28"><path d="M4 0h13l7 8v20H4z" fill="#fafafa"/><path d="m15 0 9 9-8-2z" fill="#d4d4d4"/></svg></i>
  <i class="app shot"><svg><use href="#shot"/></svg></i><i class="app shot"><svg><use href="#shot"/></svg></i><i class="app shot"><svg><use href="#shot"/></svg></i><i class="app shot"><svg><use href="#shot"/></svg></i>
  <i class="app shot"><svg viewBox="0 0 30 28"><path d="M.5 0h29v28H.5z" fill="#f2f0ee"/><path d="M9 5h14v20H9z" fill="#f2d5b6" stroke="#e89254"/><path d="m5 3 4 3" stroke="#d66b43" stroke-width="1.500"/><g fill="#d66b43"><path d="M12 8h3v3h-3zm5 0h3v3h-3z"/></g><path d="M12 14h8v3h-8zm0 5h8v3h-8z" fill="#7da0d2"/><path d="M19 20h9l1 6H20z" fill="#527eaf"/><circle cx="26" cy="24" r="3" fill="#aeb8c1" stroke="#64717d"/></svg></i>
  <i class="app shot"><svg><use href="#shot"/></svg></i>
  <i class="app"><svg viewBox="0 0 28 28"><path d="M3 3h22l-3.500 23q-7.500 3-15 0z" fill="#dce0e1"/><path d="m7 7 2 18m4-18 .5 19M20 7l-2 18m-6-9-4 8m11-14-7 12" stroke="#b7bdc1" stroke-width=".8"/><ellipse cx="14" cy="4" rx="11" ry="3.500" fill="#858a8e" stroke="#eee"/><path d="m6 4 4-2 3 3 4-3 5 2-5 2-5-1-4 1z" fill="#efefea"/><path d="m9 4 2-1m6 2 2-1" stroke="#288d96" stroke-width="1.500"/></svg></i>
</div>
</section>
</body>
</html>
```
FILE: styles.css
```css
* { box-sizing: border-box; }
body { margin: 0; width: 1280px; height: 800px; overflow: hidden; background: #2c2129; font-family: "Noto Sans", sans-serif; color: #16191f; }
i { font-style: normal; }
svg { display: block; flex: none; overflow: visible; }
.defs { position: absolute; }
h2, h3, p, dl, dd, dt { margin: 0; }
button { padding: 0; background: #fff; font: inherit; color: inherit; }

/* system menu bar */
.menubar { height: 23px; display: grid; grid-template-columns: 34px 73px 41px 44px 49px 65px 90px 67px 42px 70px 355px 33px 26px 32px 34px 38px 97px 29px 20px; padding-left: 20px; align-items: center; background: linear-gradient(90deg, #d6dbee, #dad5e8 14%, #d2dcf2 30%, #d5e4f8 55%, #d6dff4 68%, #d8daf0 82%, #ddd5e2); border-bottom: 1px solid #1c2438; font: 500 14px/22px Inter, sans-serif; color: #252536; white-space: nowrap; letter-spacing: -.1px; }
.menubar b { font-weight: 700; }
.apple { width: 14px; height: 16px; margin-top: -2px; }
.menubar .pct { font-size: 12px; letter-spacing: -.2px; font-weight: 400; }
.menubar .clock { font-size: 14px; letter-spacing: -.25px; }

.browser { height: 726px; background: #fff; overflow: hidden; border-radius: 5px; }
.tabs { height: 42px; display: flex; background: #dee1e6; border-radius: 5px 5px 0 0; }
.lights { width: 79px; display: flex; gap: 8px; padding: 15px 0 0 13px; }
.lights i { width: 12px; height: 12px; border-radius: 50%; }
.red { background: #fc5753; } .amber { background: #fdbc40; } .green { background: #05c251; }
.tab { width: 24px; flex: none; display: flex; align-items: center; justify-content: center; height: 20px; margin: 15px 0 7px; padding-left: 1px; border-right: 1px solid #8b8f94; }
.tab.w { width: 25px; }
.tab svg { width: 16px; height: 16px; }
.tab.last { border-color: transparent; }
.tab.active { width: 32px; height: 34px; margin: 8px 0 0; padding: 0; background: #fff; border: 0; border-radius: 8px 8px 0 0; }
.purple { color: #8a2be8; } .grey { color: #a9abad; }
.pr { width: 10px; overflow: hidden; font: 12px/16px Inter, sans-serif; color: #45494d; letter-spacing: .2px; -webkit-mask-image: linear-gradient(90deg, #000 60%, transparent); mask-image: linear-gradient(90deg, #000 60%, transparent); }
.plus { width: 16px; height: 16px; margin: 17px 0 0 14px; }
.chev { width: 16px; height: 16px; margin: 17px 14px 0 auto; }

.toolbar { height: 36px; display: grid; grid-template-columns: 32px 32px 30px 1014px 32px 32px 31px 34px 20px; align-items: center; padding-left: 14px; }
.toolbar svg { width: 16px; height: 16px; }
.omnibox { width: 1000px; height: 28px; border-radius: 14px; background: #f1f3f4; display: flex; align-items: center; padding-left: 13px; }
.omnibox .lock { width: 10px; height: 13px; margin-right: 11px; }
.url { width: 908px; font: 14px/20px Inter, sans-serif; color: #65696e; white-space: nowrap; letter-spacing: -.155px; }
.url b { font-weight: 400; color: #202124; }
.omnibox .url + svg { margin-right: 16px; }
.avatar { width: 22px; height: 22px; border-radius: 50%; background: #21692a; color: #fff; font: 13px/22px Inter, sans-serif; text-align: center; margin-left: -2px; }

.bookmarks { height: 32px; display: grid; grid-template-columns: 24px 123px 24px 127px 24px 126px 24px 129px 24px 126px 24px 124px 24px 130px; padding: 0 0 4px 14px; align-items: center; font: 12px/16px Inter, sans-serif; color: #3c4043; white-space: nowrap; letter-spacing: -.05px; }
.bookmarks svg { width: 16px; height: 16px; }
.alx { font: 800 10px/14px "DejaVu Sans", sans-serif; letter-spacing: -1.2px; color: #222; }

/* console header */
.awsbar { height: 42px; background: #232f3e; border-top: 1px solid #d5dbdb; display: flex; align-items: center; color: #fff; }
.awsbar b { font: 700 11.5px/16px "Noto Sans", sans-serif; white-space: nowrap; }
.awslogo { width: 34px; height: 24px; margin-left: 17px; }
.rule { width: 1px; height: 22px; background: #3f4954; flex: none; }
.r1 { margin: 0 17px 0 15px; }
.grid9 { width: 16px; height: 16px; margin-right: 8px; }
.awsbar .services { width: 62px; letter-spacing: -.2px; }
.search { width: 540px; height: 30px; border: 1px solid #879596; border-radius: 2px; background: #16191f; display: flex; align-items: center; padding: 0 10px 0 11px; color: #95a5a6; font-size: 14px; }
.search svg { width: 14px; height: 14px; margin-right: 9px; }
.search em { flex: 1; letter-spacing: -.15px; }
.awsright { flex: 1; display: flex; align-items: center; padding-left: 182px; }
.awsright svg { width: 16px; height: 16px; }
.awsright .rule { margin: 0 17px 0 16px; }
.caret { border: 4px solid transparent; border-top: 6px solid #fff; border-bottom: 0; margin-left: 6px; margin-right: 2px; }
.awsbar .region { width: 57px; letter-spacing: -.3px; } .awsbar .user { width: 98px; letter-spacing: -.23px; }

.console { height: 541px; display: flex; border-bottom: 3px solid #eceeee; background: #fff; }
.rail { width: 41px; border-right: 1px solid #d5dbdb; padding: 15px 13px; display: flex; flex-direction: column; gap: 4px; }
.rail i { height: 2px; background: #545b64; }
.trace { width: 826px; border-right: 1px solid #d5dbdb; }
.strip { height: 11px; background: #fafafa; border-bottom: 1px solid #eaeded; }
.tracehead { height: 83px; background: #fafafa; border-bottom: 1px solid #eaeded; display: flex; padding: 16px 19px 0 20px; }
.down { border: 5px solid transparent; border-top: 8px solid #16191f; border-bottom: 0; height: 0; margin: 11px 11px 0 0; }
.tracetitle { flex: 1; }
.tracetitle h2 { font: 700 18px/22px "Noto Sans", sans-serif; margin-top: 5px; letter-spacing: -.62px; }
.tracetitle p { font-size: 12px; line-height: 16px; margin-top: 4px; color: #545b64; letter-spacing: -.1px; }
.btns { display: flex; gap: 8px; }
.btn { height: 30px; border: 1px solid #545b64; border-radius: 2px; font: 700 14px/20px "Noto Sans", sans-serif; color: #545b64; display: flex; align-items: center; justify-content: center; }
.expand { width: 48px; } .goto { width: 164px; letter-spacing: -.12px; } .actions { width: 113px; gap: 10px; padding-top: 1px; }
.expand svg { width: 15px; height: 15px; }
.actions i { border: 5.500px solid transparent; border-top: 9px solid #545b64; border-bottom: 0; }
.canvasbar { height: 131px; padding: 22px 21px 0 22px; display: flex; justify-content: space-between; }
.legend { width: 275px; height: 34px; border: 1px solid #d5dbdb; display: flex; align-items: center; padding: 0 0 1px 18px; color: #545b64; font-size: 14px; letter-spacing: -.45px; }
.legend i { border: 5px solid transparent; border-left: 9px solid #545b64; border-right: 0; margin-right: 8px; }
.zoomer { display: flex; height: 32px; }
.zoomer > * { width: 50px; border: 1px solid #545b64; display: grid; place-items: center; }
.zoomer > :first-child { border-radius: 2px 0 0 2px; } .zoomer > :last-child { border-radius: 0 2px 2px 0; }
.zoomer div { width: 48px; border-color: #d5dbdb; border-width: 1px 0; }
.zoomer div i { width: 8px; height: 8px; border-radius: 50%; background: #aab7b8; }
.zoomer svg { width: 16px; height: 16px; }
.edge { font: 600 10px "Noto Sans", sans-serif; fill: #fff; }
.node { font: 14px "Noto Sans", sans-serif; fill: #16191f; }
.strong { font-weight: 700; }
.halo { filter: drop-shadow(0 1px 3px #0005); }

.panel { flex: 1; display: flex; position: relative; overflow: hidden; }
.grip { width: 32px; display: flex; gap: 3px; padding: 263px 0 0 7px; }
.grip i { width: 2px; height: 12px; background: #687078; }
.detail { width: 349px; }
.dhead { height: 117px; display: flex; padding-top: 12px; }
.dhead h2 { width: 292px; flex: none; font: 700 18px/22px "Noto Sans", sans-serif; padding-top: 8px; white-space: nowrap; letter-spacing: -.3px; }
.gear { width: 34px; height: 40px; border: 2px solid #0073bb; border-radius: 4px; display: grid; place-items: center; flex: none; }
.gear svg { width: 18px; height: 18px; }
.sep { width: 1px; height: 24px; margin: 8px 15px 0 4px; background: #eaeded; flex: none; }
.close { width: 14px; height: 14px; margin-top: 13px; }
.dtabs { height: 46px; display: flex; border-bottom: 1px solid #aab7b8; }
.arr { width: 35px; height: 33px; border-right: 1px solid #d5dbdb; display: flex; align-items: center; }
.arr svg { width: 9px; height: 15px; margin-left: 12px; }
.arr.r { border: 0; border-left: 1px solid #d5dbdb; box-shadow: -2px 0 2px -1px #0002; }
.tablist { width: 279px; height: 45px; padding-left: 2px; display: flex; overflow: hidden; }
.tablist b { font-size: 13.5px; line-height: 30px; height: 30px; margin-top: 2px; flex: none; border-right: 1px solid #aab7b8; color: #545b64; letter-spacing: -.3px; }
.tablist .on { width: 103px; padding-left: 19px; color: #ec7211; position: relative; letter-spacing: -.1px; }
.on::after { content: ""; position: absolute; left: 0; right: 0; top: 40px; height: 3px; background: #16191f; }
.tablist .res { width: 107px; padding-left: 21px; } .tablist .ann { width: 120px; padding-left: 21px; }
h3 { font: 400 18px/22px "Noto Sans", sans-serif; }
.h-ov { margin-top: 15px; letter-spacing: -.2px; }
dl { font-size: 14px; line-height: 22px; white-space: nowrap; }
dt { color: #5f6871; margin-top: 19px; }
dt.k-sub { letter-spacing: -.38px; }
.h-ov + dl dt:first-child, .h-time + dl dt { margin-top: 18px; }
dd { margin-top: 4px; }
dd.v-id { letter-spacing: .1px; }
dd.v-name { letter-spacing: -.1px; }
dd svg { display: inline-block; width: 16px; height: 16px; margin: 0 8px 0 4px; vertical-align: -3px; }
.h-time { margin-top: 39px; }
.thumb { position: absolute; left: 404px; top: 2px; width: 7px; height: 237px; border-radius: 4px; background: #7f7f7f; }

.foot { height: 33px; background: #232f3e; color: #fff; display: grid; grid-template-columns: 78px 632px 307px 68px 60px 100px; padding: 1px 0 0 16px; align-items: center; font-size: 11px; white-space: nowrap; }
.f1, .f2 { letter-spacing: -.18px; }
.f6 { letter-spacing: -.1px; padding-top: 2px; }

/* desktop */
.desk { height: 51px; padding: 0 24px; background: linear-gradient(90deg, #35272d, #2a2030 60%, #2a202b); }
.backwin { height: 9px; margin: 0 100px 0 99px; background: #000; }
.dock { height: 42px; width: 1232px; border-radius: 5px 5px 0 0; padding-left: 3px; display: flex; background: linear-gradient(90deg, #83696f, #8b6f74 20%, #8a7079 40%, #84697f 62%, #896b79 80%, #745666); }
.app { width: 32.75px; flex: none; display: flex; flex-direction: column; align-items: center; padding-top: 5px; }
.app svg { width: 28px; height: 28px; }
.shot svg { width: 30px; height: 28px; }
.run::after { content: ""; width: 3px; height: 3px; border-radius: 50%; background: #0b080a; margin-top: 4px; }
.office text { font: 900 35px Lato, sans-serif; text-anchor: middle; filter: drop-shadow(0 1px 0 #0004); }
.docksep { width: 1px; height: 30px; margin: 6px 6px 0 7px; background: #594852; }
```
